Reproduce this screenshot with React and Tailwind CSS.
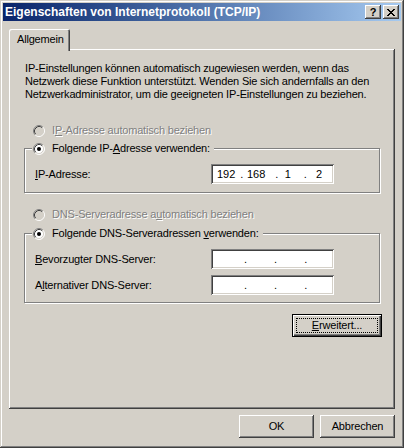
import React from "react";

const raised =
  "shadow-[inset_-1px_-1px_#404040,inset_1px_1px_#ffffff,inset_-2px_-2px_#808080,inset_2px_2px_#d4d0c8]";
const sunken =
  "shadow-[inset_1px_1px_#808080,inset_-1px_-1px_#ffffff,inset_2px_2px_#404040,inset_-2px_-2px_#d4d0c8]";

function Radio({ checked, disabled }) {
  return (
    <svg width="12" height="12" viewBox="0 0 12 12" className="shrink-0">
      <circle cx="6" cy="6" r="5" fill={disabled ? "#d4d0c8" : "#ffffff"} />
      <path d="M2.11 9.89A5.5 5.5 0 0 1 9.89 2.11" stroke="#808080" fill="none" />
      <path d="M9.89 2.11A5.5 5.5 0 0 1 2.11 9.89" stroke="#ffffff" fill="none" />
      <path d="M2.82 9.18A4.5 4.5 0 0 1 9.18 2.82" stroke="#404040" fill="none" />
      <path d="M9.18 2.82A4.5 4.5 0 0 1 2.82 9.18" stroke="#d4d0c8" fill="none" />
      {checked && <circle cx="6" cy="6" r="2" fill="#000000" />}
    </svg>
  );
}

function CloseGlyph() {
  const rows = [
    "xx....xx",
    ".xx..xx.",
    "..xxxx..",
    "...xx...",
    "..xxxx..",
    ".xx..xx.",
    "xx....xx",
  ];
  const rects = [];
  rows.forEach((r, y) =>
    r.split("").forEach((c, x) => {
      if (c === "x") rects.push(<rect key={`${x}-${y}`} x={x} y={y} width="1" height="1" fill="#000" />);
    })
  );
  return (
    <svg width="8" height="7" viewBox="0 0 8 7" shapeRendering="crispEdges">
      {rects}
    </svg>
  );
}

function TitleBtn({ children }) {
  return (
    <div className={`w-[16px] h-[14px] bg-[#d4d0c8] flex items-center justify-center ${raised}`}>
      {children}
    </div>
  );
}

function IpBox({ filled }) {
  return (
    <div className={`w-[123px] h-[20px] bg-white flex items-center tracking-normal ${sunken}`}>
      {filled ? (
        <>
          <span className="ml-[6px]">192</span>
          <span className="ml-[5px]">.</span>
          <span className="ml-[3.5px]">168</span>
          <span className="ml-[10px]">.</span>
          <span className="ml-[6.3px]">1</span>
          <span className="ml-[13.1px]">.</span>
          <span className="ml-[9.2px]">2</span>
        </>
      ) : (
        <>
          <span className="ml-[33px]">.</span>
          <span className="ml-[27px]">.</span>
          <span className="ml-[27px]">.</span>
        </>
      )}
    </div>
  );
}

function DisabledText({ children }) {
  return <span className="text-[#808080] [text-shadow:1px_1px_0_#ffffff]">{children}</span>;
}

function Field({ label, filled }) {
  return (
    <div className="flex items-center h-[20px]">
      <div className="w-[186px] pl-[10px]">{label}</div>
      <IpBox filled={filled} />
    </div>
  );
}

function GroupBox({ legend, height, children }) {
  return (
    <div
      className="relative ml-[15px] w-[356px] border border-[#808080] shadow-[inset_1px_1px_#ffffff,1px_1px_#ffffff]"
      style={{ height }}
    >
      <div className="absolute -top-[7px] left-[7px] h-[13px] pl-[1px] pr-[4px] bg-[#d4d0c8] flex items-center gap-[7px] whitespace-nowrap">
        <Radio checked />
        <span>{legend}</span>
      </div>
      {children}
    </div>
  );
}

export default function App() {
  return (
    <div className="w-[404px] h-[448px] bg-[#d4d0c8] p-[3px] flex flex-col text-black text-[11px] leading-[13px] tracking-[-0.18px] font-['Liberation_Sans',Arial,sans-serif] shadow-[inset_-1px_-1px_#404040,inset_1px_1px_#d4d0c8,inset_-2px_-2px_#808080,inset_2px_2px_#ffffff]">
      {/* Title bar */}
      <div className="h-[18px] shrink-0 flex items-center pl-[2px] pr-[2px] bg-linear-to-r from-[#0a246a] to-[#a6caf0]">
        <span className="text-white font-bold text-[12px] tracking-normal whitespace-nowrap">
          Eigenschaften von Internetprotokoll (TCP/IP)
        </span>
        <div className="ml-auto flex gap-[2px]">
          <TitleBtn>
            <span className="font-bold text-[11px] leading-[11px] tracking-normal">?</span>
          </TitleBtn>
          <TitleBtn>
            <CloseGlyph />
          </TitleBtn>
        </div>
      </div>

      {/* Tabs */}
      <div className="mt-[8px] ml-[6px] h-[20px] flex">
        <div className="relative z-10 w-[61px] h-[22px] bg-[#d4d0c8] pl-[8px] pt-[4px] rounded-t-[2px] shadow-[inset_1px_1px_#ffffff,inset_-1px_0_#404040,inset_-2px_0_#808080]">
          Allgemein
        </div>
      </div>

      {/* Panel */}
      <div className="ml-[6px] w-[386px] h-[360px] flex flex-col pt-[13px] shadow-[inset_-1px_-1px_#404040,inset_1px_1px_#ffffff,inset_-2px_-2px_#808080]">
        <p className="pl-[16px] whitespace-nowrap">
          IP-Einstellungen können automatisch zugewiesen werden, wenn das
          <br />
          Netzwerk diese Funktion unterstützt. Wenden Sie sich andernfalls an den
          <br />
          Netzwerkadministrator, um die geeigneten IP-Einstellungen zu beziehen.
        </p>

        <div className="mt-[23px] h-[13px] pl-[24px] flex items-center gap-[7px]">
          <Radio disabled />
          <DisabledText>
            I<span className="underline">P</span>-Adresse automatisch beziehen
          </DisabledText>
        </div>

        <div className="mt-[11px]">
          <GroupBox
            height={45}
            legend={
              <>
                Folgende IP-<span className="underline">A</span>dresse verwenden:
              </>
            }
          >
            <div className="mt-[15px]">
              <Field
                filled
                label={
                  <>
                    <span className="underline">I</span>P-Adresse:
                  </>
                }
              />
            </div>
          </GroupBox>
        </div>

        <div className="mt-[15px] h-[13px] pl-[24px] flex items-center gap-[7px]">
          <Radio disabled />
          <DisabledText>
            DNS-Serveradresse a<span className="underline">u</span>tomatisch beziehen
          </DisabledText>
        </div>

        <div className="mt-[12px]">
          <GroupBox
            height={70}
            legend={
              <>
                Folgende DNS-Serveradressen <span className="underline">v</span>erwenden:
              </>
            }
          >
            <div className="mt-[15px] flex flex-col gap-[6px]">
              <Field
                label={
                  <>
                    <span className="underline">B</span>evorzugter DNS-Server:
                  </>
                }
              />
              <Field
                label={
                  <>
                    A<span className="underline">l</span>ternativer DNS-Server:
                  </>
                }
              />
            </div>
          </GroupBox>
        </div>

        <div className="mt-[11px] flex justify-end pr-[13px]">
          <div className="w-[90px] h-[23px] p-[4px] bg-[#d4d0c8] shadow-[inset_0_0_0_1px_#000000,inset_2px_2px_#ffffff,inset_-2px_-2px_#404040,inset_-3px_-3px_#808080]">
            <div className="w-full h-full border border-dotted border-black flex items-center justify-center">
              <span>
                <span className="underline">E</span>rweitert...
              </span>
            </div>
          </div>
        </div>
      </div>

      {/* Bottom buttons */}
      <div className="mt-[6px] flex justify-end gap-[6px] pr-[6px]">
        <div className={`w-[75px] h-[23px] flex items-center justify-center bg-[#d4d0c8] ${raised}`}>OK</div>
        <div className={`w-[75px] h-[23px] flex items-center justify-center bg-[#d4d0c8] ${raised}`}>
          Abbrechen
        </div>
      </div>
    </div>
  );
}
